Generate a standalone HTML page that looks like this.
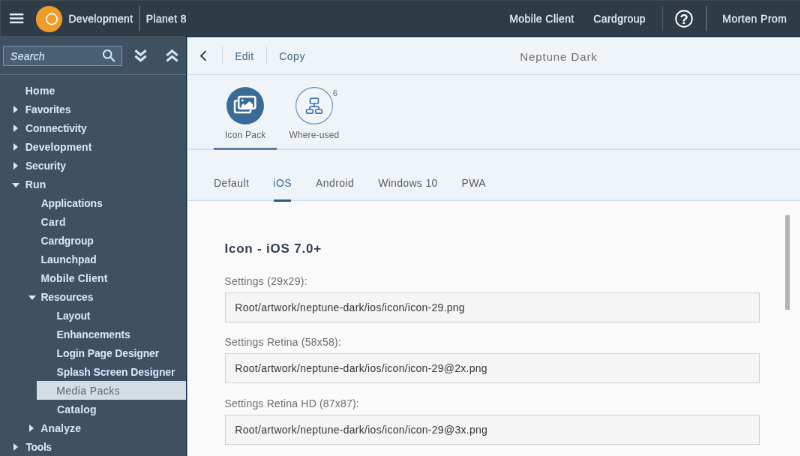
<!DOCTYPE html>
<html><head><meta charset="utf-8"><title>Planet 8</title>
<style>
html,body{margin:0;padding:0;width:800px;height:456px;overflow:hidden;background:#fafafa;}
body{font-family:"Liberation Sans",sans-serif;font-size:14px;color:#32363a;}
#w{will-change:transform;position:absolute;left:0;top:0;width:1080px;height:620px;transform:scale(.75);transform-origin:0 0;overflow:hidden;background:#fafafa;}
.a{position:absolute;white-space:nowrap;line-height:1;}
#hdr{position:absolute;left:0;top:0;width:1080px;height:48px;background:#2f3c48;}
#hdr .t{color:#e8f3ff;font-size:14px;top:17.6px;-webkit-text-stroke:0.3px #e8f3ff;}
.vsep{position:absolute;width:1px;background:#52616f;}
#side{position:absolute;left:0;top:48px;width:249.4px;height:572px;background:#3f5161;box-sizing:border-box;}
#side .r{position:absolute;height:25px;line-height:25px;color:#d6e7f8;font-weight:bold;font-size:14px;white-space:nowrap;}
.tri-r{position:absolute;width:0;height:0;border-left:6.5px solid #d6e9fc;border-top:5.4px solid transparent;border-bottom:5.4px solid transparent;}
.tri-d{position:absolute;width:0;height:0;border-top:6.6px solid #d6e9fc;border-left:5.8px solid transparent;border-right:5.8px solid transparent;}
#main{position:absolute;left:249.4px;top:48px;width:831px;height:572px;background:#fafafa;}
#tb{position:absolute;left:0;top:0;width:831px;height:51.6px;background:#eff4f9;border-bottom:1px solid #d3d9df;box-sizing:border-box;}
#ith{position:absolute;left:0;top:51.6px;width:831px;height:100px;background:#eff4f9;border-bottom:2px solid #cfdff0;box-sizing:border-box;}
#tabs{position:absolute;left:0;top:151.6px;width:831px;height:68.4px;background:#eff4f9;box-sizing:border-box;}
#tabs:after{content:'';position:absolute;left:0;bottom:0;width:100%;height:2px;background:linear-gradient(180deg,#dfeaf5 0,#dfeaf5 50%,#cbdcee 50%,#cbdcee 100%);}
.inp{position:absolute;left:50.6px;width:713.3px;height:40px;box-sizing:border-box;border:1px solid #d0d0d0;background:#f5f5f5;}
.inp span{position:absolute;left:13px;top:11.1px;font-size:14px;line-height:16px;color:#32363a;white-space:nowrap;}
.lbl{position:absolute;left:50px;font-size:14px;line-height:16px;color:#6a6d70;white-space:nowrap;}
</style></head><body>
<div id="w">
<div id="hdr">
  <svg class="a" style="left:12px;top:16px" width="20" height="17" viewBox="0 0 20 17"><g fill="#e4f1ff"><rect x="1" y="2" width="18.3" height="2.4"/><rect x="1" y="7.3" width="18.3" height="2.4"/><rect x="1" y="12.7" width="18.3" height="2.4"/></g></svg>
  <svg class="a" style="left:46.6px;top:6.5px" width="37" height="37" viewBox="0 0 37 37"><circle cx="18.5" cy="18.5" r="17.6" fill="#f09c2b"/><circle cx="22" cy="18.5" r="7.1" fill="none" stroke="#fff" stroke-width="1.7"/></svg>
  <div class="a" style="left:0;top:0;width:1080px;height:0.8px;background:#3e4b57"></div><div class="a" style="left:0;top:0;width:1px;height:48px;background:#3e4b57"></div>
  <span class="a t" id="h1" style="left:92px;margin-left:-0.62px;letter-spacing:0.324px">Development</span>
  <div class="vsep" style="left:185.33px;top:7.6px;height:33.2px;width:1.33px"></div>
  <span class="a t" id="h2" style="left:195px;margin-left:-0.20px;letter-spacing:0.319px">Planet 8</span>
  <span class="a t" id="h3" style="left:680px;margin-left:-0.72px;letter-spacing:0.421px">Mobile Client</span>
  <span class="a t" id="h4" style="left:792px;margin-left:-0.65px;letter-spacing:0.391px">Cardgroup</span>
  <div class="vsep" style="left:882.67px;top:7.6px;height:33.2px;width:1.33px"></div>
  <svg class="a" style="left:899px;top:12px" width="26" height="26" viewBox="0 0 26 26"><circle cx="13" cy="13" r="10.8" fill="none" stroke="#fff" stroke-width="1.9"/><text x="13.1" y="19.6" text-anchor="middle" font-family="Liberation Sans, sans-serif" font-weight="bold" font-size="18.5" fill="#fff">?</text></svg>
  <div class="vsep" style="left:941.33px;top:7.6px;height:33.2px;width:1.33px"></div>
  <span class="a t" id="h5" style="left:964px;margin-left:-0.71px;letter-spacing:0.476px">Morten Prom</span>
</div>

<div id="side">
  <div class="a" style="left:4px;top:13px;width:159px;height:27px;box-sizing:border-box;border:1px solid #7c91a4;background:#4a6073"></div>
  <span class="a" id="s0" style="left:14px;top:20px;font-style:italic;font-size:14px;color:#cfe0f0;-webkit-text-stroke:0.25px #cfe0f0;margin-left:0.09px;letter-spacing:0.238px">Search</span>
  <svg class="a" style="left:136px;top:17px" width="18" height="18" viewBox="0 0 18 18"><circle cx="7.2" cy="7.2" r="5.3" fill="none" stroke="#d6e8f9" stroke-width="2"/><path d="M11.3 11.3 L16.2 16.2" stroke="#d6e8f9" stroke-width="2.3" stroke-linecap="round"/></svg>
  <svg class="a" style="left:178.1px;top:16.3px" width="19" height="21" viewBox="0 0 19 21"><path d="M2.4 3.2 L9.5 9.2 L16.6 3.2 M2.4 10.7 L9.5 16.7 L16.6 10.7" fill="none" stroke="#d3e8fd" stroke-width="3.1"/></svg>
  <svg class="a" style="left:219.9px;top:16.3px" width="19" height="21" viewBox="0 0 19 21"><path d="M2.4 9.9 L9.5 3.9 L16.6 9.9 M2.4 17.4 L9.5 11.4 L16.6 17.4" fill="none" stroke="#d3e8fd" stroke-width="3.1"/></svg>
  <div class="a" style="left:0;top:50.6px;width:250px;height:1px;background:#5d7284"></div>
  <div class="r" id="n0" style="top:60.7px;left:34.4px;margin-left:-0.71px;letter-spacing:0.270px">Home</div>
  <div class="tri-r" style="left:17.8px;top:92.7px"></div>
  <div class="r" id="n1" style="top:85.7px;left:34.4px;margin-left:-0.70px;letter-spacing:-0.187px">Favorites</div>
  <div class="tri-r" style="left:17.8px;top:117.7px"></div>
  <div class="r" id="n2" style="top:110.7px;left:34.4px;margin-left:-0.42px;letter-spacing:-0.199px">Connectivity</div>
  <div class="tri-r" style="left:17.8px;top:142.7px"></div>
  <div class="r" id="n3" style="top:135.7px;left:34.4px;margin-left:-0.71px;letter-spacing:0.077px">Development</div>
  <div class="tri-r" style="left:17.8px;top:167.7px"></div>
  <div class="r" id="n4" style="top:160.7px;left:34.4px;margin-left:-0.49px;letter-spacing:-0.144px">Security</div>
  <div class="tri-d" style="left:16.1px;top:195.9px"></div>
  <div class="r" id="n5" style="top:185.7px;left:34.4px;margin-left:-0.71px;letter-spacing:0.164px">Run</div>
  <div class="r" id="n6" style="top:210.7px;left:55.1px;margin-left:-0.45px;letter-spacing:-0.180px">Applications</div>
  <div class="r" id="n7" style="top:235.7px;left:55.1px;margin-left:-0.53px;letter-spacing:0.371px">Card</div>
  <div class="r" id="n8" style="top:260.7px;left:55.1px;margin-left:-0.52px;letter-spacing:-0.157px">Cardgroup</div>
  <div class="r" id="n9" style="top:285.7px;left:55.1px;margin-left:-0.67px;letter-spacing:-0.043px">Launchpad</div>
  <div class="r" id="n10" style="top:310.7px;left:55.1px;margin-left:-0.69px;letter-spacing:0.162px">Mobile Client</div>
  <div class="tri-d" style="left:37.5px;top:345.9px"></div>
  <div class="r" id="n11" style="top:335.7px;left:55.1px;margin-left:-0.67px;letter-spacing:-0.193px">Resources</div>
  <div class="r" id="n12" style="top:360.7px;left:76.4px;margin-left:-0.81px;letter-spacing:-0.190px">Layout</div>
  <div class="r" id="n13" style="top:385.7px;left:76.4px;margin-left:-0.82px;letter-spacing:-0.134px">Enhancements</div>
  <div class="r" id="n14" style="top:410.7px;left:76.4px;margin-left:-0.82px;letter-spacing:-0.146px">Login Page Designer</div>
  <div class="r" id="n15" style="top:435.7px;left:76.4px;margin-left:-0.84px;letter-spacing:-0.115px">Splash Screen Designer</div>
  <div class="a" style="left:49.3px;top:460.4px;width:200.7px;height:24.6px;background:#d4dde6"></div>
  <div class="r" id="n16" style="top:460.7px;left:76.4px;margin-left:-1.14px;letter-spacing:0.423px;color:#5a6570;font-weight:normal">Media Packs</div>
  <div class="r" id="n17" style="top:485.7px;left:76.4px;margin-left:-0.42px;letter-spacing:0.200px">Catalog</div>
  <div class="tri-r" style="left:39.2px;top:517.7px"></div>
  <div class="r" id="n18" style="top:510.7px;left:55.1px;margin-left:-0.85px;letter-spacing:0.140px">Analyze</div>
  <div class="tri-r" style="left:17.8px;top:542.7px"></div>
  <div class="r" id="n19" style="top:535.7px;left:34.4px;margin-left:0.14px;letter-spacing:-0.412px">Tools</div>
</div>

<div class="a" style="left:248px;top:48px;width:832px;height:2px;background:linear-gradient(180deg,#0b2743 0,#0b2743 50%,rgba(11,39,67,.45) 50%,rgba(11,39,67,.45) 100%);z-index:6"></div>
<div class="a" style="left:248px;top:48px;width:2px;height:572px;background:linear-gradient(90deg,#0b2743 0,#0b2743 50%,rgba(11,39,67,.45) 50%,rgba(11,39,67,.45) 100%);z-index:6"></div>
<div id="main"><div class="a" style="left:0;top:0;width:2.6px;height:220px;z-index:5;background:linear-gradient(90deg,rgba(255,255,255,.75),rgba(255,255,255,0))"></div>
  <div id="tb">
    <svg class="a" style="left:14.3px;top:17px" width="14" height="18" viewBox="0 0 14 18"><path d="M10.4 3.2 L4 9.5 L10.4 15.8" fill="none" stroke="#2b3b4b" stroke-width="1.9"/></svg>
    <div class="vsep" style="left:46.6px;top:14.4px;height:24px;width:1.33px;background:#cfd5db"></div>
    <span class="a" id="t1" style="left:63px;top:19.5px;font-size:14px;color:#3f6a91;margin-left:0.83px;letter-spacing:0.242px">Edit</span>
    <div class="vsep" style="left:105.27px;top:14.4px;height:24px;width:1.33px;background:#cfd5db"></div>
    <span class="a" id="t2" style="left:122px;top:19.5px;font-size:14px;color:#3f6a91;margin-left:0.80px;letter-spacing:0.514px">Copy</span>
    <span class="a" id="t3" style="left:443px;top:19.7px;font-size:15px;color:#6e6e6e;margin-left:0.79px;letter-spacing:0.920px">Neptune Dark</span>
  </div>
  <div id="ith">
    <svg class="a" style="left:52.6px;top:16.6px" width="50" height="50" viewBox="0 0 50 50"><circle cx="25" cy="25" r="25" fill="#3a6b97"/>
      <g fill="none" stroke="#fff" stroke-width="2.5"><path d="M14.6 18.2 h-1.6 a2 2 0 0 0 -2 2 v11.8 a2 2 0 0 0 2 2 h17.1 a2 2 0 0 0 2 -2 v-1.8"/><rect x="16.2" y="12.9" width="22.2" height="15.9" rx="2.2"/></g><path d="M20 28 v-3.6 l2.2-2.4 2.6 2.2 5.9-5.2 4.6 4.6 v4.4z" fill="#fff"/><circle cx="21.4" cy="17.9" r="1.45" fill="#fff"/></svg>
    <span class="a" id="i1" style="left:50px;top:74px;font-size:12px;color:#5f6266;margin-left:0.57px;letter-spacing:0.216px">Icon Pack</span>
    <svg class="a" style="left:144.3px;top:16.6px" width="50" height="50" viewBox="0 0 50 50"><circle cx="25" cy="25" r="24.4" fill="#f2f6fa" stroke="#5d8dbb" stroke-width="1.1"/>
      <g fill="none" stroke="#3d74ab" stroke-width="1.7"><rect x="19.5" y="15.2" width="11" height="6.8" rx="1.2"/><rect x="14.6" y="30" width="8.6" height="5.2" rx="1.2"/><rect x="26.8" y="30" width="8.6" height="5.2" rx="1.2"/><path d="M25 22 v4.1 M18.9 30 v-1.9 a2 2 0 0 1 2 -2 h8.2 a2 2 0 0 1 2 2 v1.9"/></g></svg>
    <span class="a" id="i2" style="left:135px;top:74px;font-size:12px;color:#5f6266;margin-left:1.14px;letter-spacing:0.145px">Where-used</span>
    <span class="a" id="i3" style="left:194.4px;top:19.6px;font-size:11.5px;color:#6a6d70">6</span>
    <div class="a" style="left:35.8px;top:97.6px;width:83.5px;height:3px;background:#5b7fa3;z-index:2"></div>
  </div>
  <div id="tabs">
    <span class="a" id="b1" style="left:36px;top:37.5px;font-size:14px;color:#5a5d60;margin-left:-0.33px;letter-spacing:0.412px">Default</span>
    <span class="a" id="b2" style="left:115px;top:37.5px;font-size:14px;color:#3f6f9c;margin-left:-0.05px;letter-spacing:0.443px">iOS</span>
    <span class="a" id="b3" style="left:171px;top:37.5px;font-size:14px;color:#5a5d60;margin-left:0.63px;letter-spacing:0.433px">Android</span>
    <span class="a" id="b4" style="left:254px;top:37.5px;font-size:14px;color:#5a5d60;margin-left:0.77px;letter-spacing:0.318px">Windows 10</span>
    <span class="a" id="b5" style="left:366px;top:37.5px;font-size:14px;color:#5a5d60;margin-left:0.09px;letter-spacing:0.333px">PWA</span>
    <div class="a" style="left:115.8px;top:66.4px;width:22.9px;height:3px;background:#2c5b86;z-index:2"></div>
  </div>
  <span class="a" id="c0" style="left:50px;top:275.2px;font-size:17px;font-weight:bold;color:#2e3e4e;margin-left:-0.01px;letter-spacing:0.803px">Icon - iOS 7.0+</span>
  <div class="lbl" id="l1" style="top:319px;margin-left:-0.06px;letter-spacing:0.272px">Settings (29x29):</div>
  <div class="inp" style="top:342px"><span id="v1" style="margin-left:-0.63px;letter-spacing:0.269px">Root/artwork/neptune-dark/ios/icon/icon-29.png</span></div>
  <div class="lbl" id="l2" style="top:400.3px;margin-left:0.12px;letter-spacing:0.219px">Settings Retina (58x58):</div>
  <div class="inp" style="top:423.3px"><span id="v2" style="margin-left:-0.66px;letter-spacing:0.273px">Root/artwork/neptune-dark/ios/icon/icon-29@2x.png</span></div>
  <div class="lbl" id="l3" style="top:481.7px;margin-left:0.05px;letter-spacing:0.191px">Settings Retina HD (87x87):</div>
  <div class="inp" style="top:504.7px"><span id="v3" style="margin-left:-0.64px;letter-spacing:0.277px">Root/artwork/neptune-dark/ios/icon/icon-29@3x.png</span></div>
  <div class="a" style="left:797.4px;top:238.9px;width:6.1px;height:126px;background:#b2b2b2"></div>
</div>
</div>
</body></html>
